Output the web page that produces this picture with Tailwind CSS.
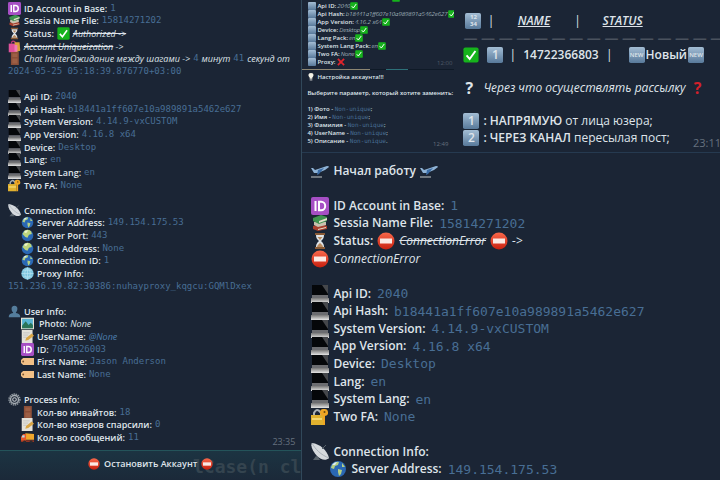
<!DOCTYPE html>
<html lang="ru">

<head>
    <meta charset="UTF-8">
    <meta name="viewport" content="width=device-width, initial-scale=1.0">
    <title>Accounts</title>
    <script src="https://cdn.jsdelivr.net/npm/@tailwindcss/browser@4"></script>
</head>

<body class="bg-[#0f1a27] text-[#dfe4ea] font-['Open_Sans','Noto_Sans',sans-serif]">

    <!-- Icons -->
    <svg class="absolute size-0" aria-hidden="true">
        <defs>
            <linearGradient id="steel" x2="0" y2="1">
                <stop offset="0" stop-color="#a3bdd4" />
                <stop offset="1" stop-color="#58799a" />
            </linearGradient>
            <linearGradient id="red" x2="0" y2="1">
                <stop offset="0" stop-color="#f8674a" />
                <stop offset="1" stop-color="#c9200f" />
            </linearGradient>
            <linearGradient id="metal" x2="0" y2="1">
                <stop offset="0" stop-color="#777" />
                <stop offset="1" stop-color="#e4e4e4" />
            </linearGradient>
        </defs>
        <symbol id="id" viewBox="0 0 18 18">
            <rect width="18" height="18" rx="2" fill="#a64fc4" />
            <path d="M4.5 4v10M8 4.8h2.2a4 4.2 0 0 1 0 8.4H8z" fill="none" stroke="#fff" stroke-width="2" />
        </symbol>
        <symbol id="books" viewBox="0 0 18 18">
            <path d="M2 12l9-2 5 2v3l-9 2-5-2z" fill="#a8412f" />
            <path d="M3 8l8-2 4 2v3l-8 2-4-2z" fill="#c8c2b0" />
            <path d="M2 4l8-3 6 2v4l-8 3-6-3z" fill="#3f9350" />
            <path d="M8 7l8-3v2L8 9zM7 15l8-2v1l-8 2z" fill="#e6e0cc" />
        </symbol>
        <symbol id="hourglass" viewBox="0 0 18 18">
            <path d="M4 1h10v2H4zM4 15h10v2H4z" fill="#8a5a35" />
            <path d="M5 3h8c0 3-1 4-3 6 2 2 3 3 3 6H5c0-3 1-4 3-6-2-2-3-3-3-6z" fill="#dfe3e6" />
            <path d="M6.500 5h5L9 8zM6 15c0-2 2-3 3-4 1 1 3 2 3 4z" fill="#b98a5e" />
        </symbol>
        <symbol id="check" viewBox="0 0 18 18">
            <rect x=".5" y=".5" width="17" height="17" rx="2" fill="#16b31c" />
            <path d="M4 9.500l3.500 4L14 4.500" fill="none" stroke="#fff" stroke-width="2.200" />
        </symbol>
        <symbol id="bags" viewBox="0 0 18 18">
            <path d="M5 5V3q2-3 5 0v2" fill="none" stroke="#c23a7a" stroke-width="1.500" />
            <path d="M1 5h10v12H1z" fill="#e0529b" />
            <path d="M9 3h7l1 12-6 2z" fill="#d9a03c" />
            <path d="M9 7h4v9H9z" fill="#f07cb8" />
        </symbol>
        <symbol id="door" viewBox="0 0 18 18">
            <path d="M4 0h11v18H4z" fill="#8b4f38" />
            <path d="M6 2h7v5H6zM6 9h7v7H6z" fill="#9d5f45" />
        </symbol>
        <symbol id="device" viewBox="0 0 18 18">
            <path d="M1 0h16v10H1z" fill="#05070a" />
            <path d="M11 0h6v9z" fill="#45474b" />
            <path d="M1 10h16v4H1z" fill="#6b6c70" />
            <path d="M0 13h18v5H0z" fill="url(#metal)" />
        </symbol>
        <symbol id="lock" viewBox="0 0 18 18">
            <path d="M3 8V5q3-6 7 0v3" fill="none" stroke="#a9b0b5" stroke-width="2" />
            <path d="M0 7h12v10H0z" fill="#e0b12f" />
            <path d="M1 10h10v2H1z" fill="#f4d66d" />
            <path d="M13 1a3.500 3.500 0 0 1 1 7v9h-2V8a3.500 3.500 0 0 1 1-7z" fill="#efa624" />
            <circle cx="13.500" cy="4" r="1" fill="#6b4a12" />
        </symbol>
        <symbol id="dish" viewBox="0 0 18 18">
            <path d="M5 13l-3 4h7l-2-3z" fill="#59636c" />
            <path d="M1 0c8 1 15 7 17 15-3 3-8 2-12-2S-1 3 1 0z" fill="#d5d9dd" />
            <path d="M1 0c3 6 9 12 17 15" fill="none" stroke="#a9b1b8" />
            <path d="M11 6l4-4" stroke="#59636c" />
        </symbol>
        <symbol id="globe" viewBox="0 0 18 18">
            <circle cx="9" cy="9" r="8" fill="#2a68b4" />
            <path d="M4 4q3-3 6-2l-1 3-3 1-1 3-3-1q0-2 2-4zM9 9l4 1-1 4-2 2-1-4zM13 3l3 4-3 0z" fill="#b4cf82" />
            <path d="M3 5q2-3 5-3l-2 3z" fill="#dcecf5" />
        </symbol>
        <symbol id="globe2" viewBox="0 0 18 18">
            <circle cx="9" cy="9" r="8" fill="#2a68b4" />
            <path d="M5 2q5-2 9 1l1 4-4 1-2 4-3-1-4-4z" fill="#bcd57b" />
            <path d="M4 4q3-3 6-2l-3 4z" fill="#eef3cc" />
        </symbol>
        <symbol id="mesh" viewBox="0 0 18 18">
            <circle cx="9" cy="9" r="8.500" fill="#7fc6df" />
            <path d="M1 9h16M9 1v16M3 4.500h12M3 13.500h12M9 1Q1 9 9 17Q17 9 9 1" fill="none" stroke="#b4e2f0" />
        </symbol>
        <symbol id="user" viewBox="0 0 18 18">
            <path d="M9 1c6 0 4 8 2 9v1c4 1 6 2 6 6H1c0-4 2-5 6-6v-1C5 9 3 1 9 1z" fill="#547d9c" />
        </symbol>
        <symbol id="photo" viewBox="0 0 18 18">
            <path d="M0 1h18v16H0z" fill="#e9e4d4" />
            <path d="M1.500 2.500h15v13h-15z" fill="#58b4d4" />
            <path d="M1.500 12l5-6 4 5 3-3 3 3v4.500h-15z" fill="#2b7458" />
        </symbol>
        <symbol id="memo" viewBox="0 0 18 18">
            <path d="M1 0h15v18H1z" fill="#e4e2da" />
            <path d="M3 4h9M3 7h7M3 10h5" stroke="#b9bbba" />
            <path d="M6 15l1-4 8-6 3 3-8 6z" fill="#d9a646" />
        </symbol>
        <symbol id="tag" viewBox="0 0 18 18">
            <path d="M3 4h15v10H3L0 11V7z" fill="#f2c086" />
            <circle cx="3" cy="9" r="1.300" fill="#7b5430" />
        </symbol>
        <symbol id="gear" viewBox="0 0 18 18">
            <circle cx="9" cy="9" r="7.500" fill="none" stroke="#929aa1" stroke-width="2" stroke-dasharray="2 1" />
            <circle cx="9" cy="9" r="5.500" fill="none" stroke="#a6adb3" stroke-width="2" />
            <circle cx="9" cy="9" r="2.500" fill="none" stroke="#c2c7cb" stroke-width="1.500" />
        </symbol>
        <symbol id="truck" viewBox="0 0 18 18">
            <path d="M6 3l12 1v8H6z" fill="#efa62c" />
            <path d="M0 8l3-4h4v10H0z" fill="#e4572c" />
            <path d="M2 6h3v3H1z" fill="#b5d7e4" />
            <path d="M0 13h18v2H0z" fill="#a8381f" />
            <circle cx="5" cy="15" r="2" fill="#2b2b2f" />
            <circle cx="14" cy="15" r="2" fill="#2b2b2f" />
        </symbol>
        <symbol id="stop" viewBox="0 0 18 18">
            <circle cx="9" cy="9" r="8.500" fill="url(#red)" />
            <path d="M3 6.500h12v5H3z" fill="#fbe9e4" />
        </symbol>
        <symbol id="plane" viewBox="0 0 18 18">
            <path d="M0 6l2 0 2 2 12-4q2 0 2 1l-4 3-7 3H3z" fill="#8fb3d6" />
            <path d="M7 8l6-2-5 6-2 1z" fill="#3a6ba5" />
            <path d="M0 14h11v2H0z" fill="#70777f" />
        </symbol>
        <symbol id="key" viewBox="0 0 18 18">
            <rect width="18" height="18" rx="2" fill="url(#steel)" />
        </symbol>
        <symbol id="cross" viewBox="0 0 18 18">
            <path d="M2 2l14 14M16 2L2 16" stroke="#e0242c" stroke-width="4" />
        </symbol>
        <symbol id="bulb" viewBox="0 0 18 18">
            <path d="M9 0c8 0 6 8 3 10v3H6v-3C3 8 1 0 9 0z" fill="#f5f3e6" />
            <path d="M6 14h6v3H6z" fill="#a9adb0" />
        </symbol>
    </svg>

    <main class="flex h-screen overflow-hidden">

        <!-- Account card -->
        <section class="flex w-[42%] shrink-0 flex-col border-r border-[#31485a]">
            <div class="relative flex flex-1 flex-col bg-[#1b2535] pt-[2px] pb-[6px] pl-2 text-[9px] leading-none whitespace-nowrap [&>p]:flex [&>p]:min-h-0 [&>p]:flex-1 [&>p]:items-center [&>p]:gap-[3px] [&_svg]:size-[13px] [&_svg]:shrink-0 [&_b]:font-semibold [&_code]:font-['DejaVu_Sans_Mono',monospace] [&_code]:text-[#486e94]">
                <p><svg><use href="#id" /></svg><b>ID Account in Base:</b><code>1</code></p>
                <p><svg><use href="#books" /></svg><b>Sessia Name File:</b><code>15814271202</code></p>
                <p><svg><use href="#hourglass" /></svg><b>Status:</b><svg><use href="#check" /></svg><i class="line-through">Authorized -&gt;</i></p>
                <p><svg><use href="#bags" /></svg><i><s>Account Uniqueization</s> -&gt;</i></p>
                <p><svg><use href="#door" /></svg><i>Chat InviterОжидание между шагами -&gt;</i><code>4</code><i>минут</i><code>41</code><i>секунд от</i></p>
                <p><code>2024-05-25 05:18:39.876770+03:00</code></p>
                <p></p>
                <p><svg><use href="#device" /></svg><b>Api ID:</b><code>2040</code></p>
                <p><svg><use href="#device" /></svg><b>Api Hash:</b><code>b18441a1ff607e10a989891a5462e627</code></p>
                <p><svg><use href="#device" /></svg><b>System Version:</b><code>4.14.9-vxCUSTOM</code></p>
                <p><svg><use href="#device" /></svg><b>App Version:</b><code>4.16.8 x64</code></p>
                <p><svg><use href="#device" /></svg><b>Device:</b><code>Desktop</code></p>
                <p><svg><use href="#device" /></svg><b>Lang:</b><code>en</code></p>
                <p><svg><use href="#device" /></svg><b>System Lang:</b><code>en</code></p>
                <p><svg><use href="#lock" /></svg><b>Two FA:</b><code>None</code></p>
                <p></p>
                <p><svg><use href="#dish" /></svg><b>Connection Info:</b></p>
                <p class="pl-[13px]"><svg><use href="#globe" /></svg><b>Server Address:</b><code>149.154.175.53</code></p>
                <p class="pl-[13px]"><svg><use href="#globe2" /></svg><b>Server Port:</b><code>443</code></p>
                <p class="pl-[13px]"><svg><use href="#globe2" /></svg><b>Local Address:</b><code>None</code></p>
                <p class="pl-[13px]"><svg><use href="#globe" /></svg><b>Connection ID:</b><code>1</code></p>
                <p class="pl-[13px]"><svg><use href="#mesh" /></svg><b>Proxy Info:</b></p>
                <p><code>151.236.19.82:30386:nuhayproxy_kqgcu:GQMlDxex</code></p>
                <p></p>
                <p><svg><use href="#user" /></svg><b>User Info:</b></p>
                <p class="pl-[13px]"><svg><use href="#photo" /></svg><b class="pl-[2px]">Photo:</b><i>None</i></p>
                <p class="pl-[13px]"><svg><use href="#memo" /></svg><b>UserName:</b><a href="#" class="italic text-[#4d7eae]">@None</a></p>
                <p class="pl-[13px]"><svg><use href="#id" /></svg><b>ID:</b><code>7050526003</code></p>
                <p class="pl-[13px]"><svg><use href="#tag" /></svg><b>First Name:</b><code>Jason Anderson</code></p>
                <p class="pl-[13px]"><svg><use href="#tag" /></svg><b>Last Name:</b><code>None</code></p>
                <p></p>
                <p><svg><use href="#gear" /></svg><b>Process Info:</b></p>
                <p class="pl-[13px]"><svg><use href="#door" /></svg><b>Кол-во инвайтов:</b><code>18</code></p>
                <p class="pl-[13px]"><svg><use href="#memo" /></svg><b>Кол-во юзеров спарсили:</b><code>0</code></p>
                <p class="pl-[13px]"><svg><use href="#truck" /></svg><b>Кол-во сообщений:</b><code>11</code></p>
                <time class="absolute right-[6px] bottom-[4px] text-[#66717f]">23:35</time>
            </div>
            <button class="relative flex h-[30px] items-center justify-center gap-1 overflow-hidden border-t border-[#24545a] bg-linear-to-b from-[#1c3442] to-[#1b2939] pb-1 text-[9px] font-semibold">
                <span class="absolute right-0 bottom-1 font-['DejaVu_Sans_Mono',monospace] text-lg leading-none whitespace-pre text-[#34444f]" aria-hidden="true"><b>lCase</b>(n cl</span>
                <svg class="relative size-3"><use href="#stop" /></svg>
                <span class="relative">Остановить Аккаунт</span>
                <svg class="relative size-3"><use href="#stop" /></svg>
            </button>
        </section>

        <div class="flex min-w-0 flex-1 flex-col">
            <div class="flex h-[152px] shrink-0">

                <!-- Settings cards -->
                <section class="flex w-[152px] shrink-0 flex-col text-[6px] leading-[8px] whitespace-nowrap [&_b]:font-semibold">
                    <div class="relative h-[69px] bg-[#1b2535] pl-[6px] [&>p]:flex [&>p]:items-center [&_b]:px-px [&_i]:font-light [&_svg]:size-2 [&_svg]:shrink-0">
                        <div class="flex h-[2px] items-end overflow-hidden pl-[84px]"><svg><use href="#check" /></svg></div>
                        <p><svg><use href="#key" /></svg><b>Api ID:</b><i>2040</i><svg><use href="#check" /></svg></p>
                        <p><svg><use href="#key" /></svg><b>Api Hash:</b><i>b18441a1ff607e10a989891a5462e627</i><svg><use href="#check" /></svg></p>
                        <p><svg><use href="#key" /></svg><b>App Version:</b><i>4.16.2 x64</i><svg><use href="#check" /></svg></p>
                        <p><svg><use href="#key" /></svg><b>Device:</b><i>Desktop</i><svg><use href="#check" /></svg></p>
                        <p><svg><use href="#key" /></svg><b>Lang Pack:</b><i>en</i><svg><use href="#check" /></svg></p>
                        <p><svg><use href="#key" /></svg><b>System Lang Pack:</b><i>en</i><svg><use href="#check" /></svg></p>
                        <p><svg><use href="#key" /></svg><b>Two FA:</b><i>None</i><svg><use href="#check" /></svg></p>
                        <p><svg><use href="#key" /></svg><b>Proxy:</b><svg><use href="#cross" /></svg></p>
                        <time class="absolute right-[2px] bottom-[2px] text-[#4f5a68]">12:00</time>
                    </div>
                    <div class="flex h-px gap-4"><span class="w-[68px] bg-[#8d8672]"></span><span class="w-[22px] bg-[#2d7078]"></span></div>
                    <div class="relative flex-1 bg-[#1b2535] pt-[3px] pl-[5px] [&_code]:font-['DejaVu_Sans_Mono',monospace] [&_code]:text-[#486e94]">
                        <p class="flex items-center gap-[2px]"><svg class="size-2"><use href="#bulb" /></svg><b>Настройка аккаунта!!!</b></p>
                        <p class="py-2"><b>Выберите параметр, который хотите заменить:</b></p>
                        <p><b>1) Фото - </b><code>Non-unique</code>;</p>
                        <p><b>2) Имя - </b><code>Non-unique</code>;</p>
                        <p><b>3) Фамилия - </b><code>Non-unique</code>;</p>
                        <p><b>4) UserName - </b><code>Non-unique</code>;</p>
                        <p><b>5) Описание - </b><code>Non-unique</code>.</p>
                        <time class="absolute right-[6px] bottom-[4px] text-[#66717f]">12:49</time>
                    </div>
                </section>

                <!-- Account list -->
                <section class="relative flex min-w-0 flex-1 flex-col overflow-hidden bg-[#1b2535] pt-[13px] pb-[6px] pl-[9px] text-[12px] leading-none whitespace-nowrap">
                    <table class="flex flex-3 flex-col">
                        <tbody class="flex flex-1 flex-col">
                            <tr class="flex flex-1 items-center italic">
                                <td class="relative ml-[2px] grid size-4 place-items-center text-[6px] leading-[7px] font-bold not-italic">
                                    <svg class="absolute size-4"><use href="#key" /></svg>
                                    <span class="relative text-center">12<br>34</span>
                                </td>
                                <td class="pl-[6px]">|</td>
                                <th class="w-[80px] text-center font-semibold underline">NAME</th>
                                <td>|</td>
                                <th class="pl-[22px] font-semibold underline">STATUS</th>
                            </tr>
                            <tr class="flex min-h-0 flex-1 items-center text-sm leading-none font-bold text-[#4a525e]">
                                <td colspan="5">— — — — — — — — — — — — — — —</td>
                            </tr>
                            <tr class="flex flex-1 items-center font-semibold">
                                <td><svg class="size-4"><use href="#check" /></svg></td>
                                <td class="relative ml-2 grid size-4 place-items-center">
                                    <svg class="absolute size-4"><use href="#key" /></svg><span class="relative">1</span>
                                </td>
                                <td class="pl-[6px] font-normal">|</td>
                                <td class="w-[90px] text-center">14722366803</td>
                                <td class="font-normal">|</td>
                                <td class="flex items-center gap-px pl-4">
                                    <span class="relative grid size-4 place-items-center text-[6px]"><svg class="absolute size-4"><use href="#key" /></svg><span class="relative">NEW</span></span>
                                    Новый
                                    <span class="relative grid size-4 place-items-center text-[6px]"><svg class="absolute size-4"><use href="#key" /></svg><span class="relative">NEW</span></span>
                                </td>
                            </tr>
                        </tbody>
                    </table>
                    <p class="flex-1"></p>
                    <p class="flex flex-1 items-center gap-2"><b class="w-3 text-center text-base leading-none">?</b><i>Через что осуществлять рассылку</i><b class="text-base leading-none text-[#d3202b]">?</b></p>
                    <p class="flex-1"></p>
                    <p class="flex flex-1 items-center gap-1">
                        <span class="relative grid size-4 place-items-center font-semibold"><svg class="absolute size-4"><use href="#key" /></svg><span class="relative">1</span></span>
                        <span><b class="font-semibold">: НАПРЯМУЮ</b> от лица юзера;</span>
                    </p>
                    <p class="flex flex-1 items-center gap-1">
                        <span class="relative grid size-4 place-items-center font-semibold"><svg class="absolute size-4"><use href="#key" /></svg><span class="relative">2</span></span>
                        <span><b class="font-semibold">: ЧЕРЕЗ КАНАЛ</b> пересылая пост;</span>
                    </p>
                    <time class="absolute -right-px bottom-1 text-[11px] text-[#66717f]">23:11</time>
                </section>
            </div>

            <!-- Start log -->
            <section class="flex flex-1 flex-col border-t border-[#263a50] bg-[#1b2535] pt-[9px] pb-[2px] pl-[9px] text-[12px] leading-none whitespace-nowrap [&>p]:flex [&>p]:min-h-0 [&>p]:flex-1 [&>p]:items-center [&>p]:gap-1 [&_svg]:size-[18px] [&_svg]:shrink-0 [&_b]:font-semibold [&_code]:ml-[2px] [&_code]:font-['DejaVu_Sans_Mono',monospace] [&_code]:text-[13px] [&_code]:text-[#486e94]">
                <p><svg><use href="#plane" /></svg><b>Начал работу</b><svg><use href="#plane" /></svg></p>
                <p></p>
                <p><svg><use href="#id" /></svg><b>ID Account in Base:</b><code>1</code></p>
                <p><svg><use href="#books" /></svg><b>Sessia Name File:</b><code>15814271202</code></p>
                <p><svg><use href="#hourglass" /></svg><b>Status:</b><svg><use href="#stop" /></svg><i class="line-through">ConnectionError</i><svg><use href="#stop" /></svg><i>-&gt;</i></p>
                <p><svg><use href="#stop" /></svg><i>ConnectionError</i></p>
                <p></p>
                <p><svg><use href="#device" /></svg><b>Api ID:</b><code>2040</code></p>
                <p><svg><use href="#device" /></svg><b>Api Hash:</b><code>b18441a1ff607e10a989891a5462e627</code></p>
                <p><svg><use href="#device" /></svg><b>System Version:</b><code>4.14.9-vxCUSTOM</code></p>
                <p><svg><use href="#device" /></svg><b>App Version:</b><code>4.16.8 x64</code></p>
                <p><svg><use href="#device" /></svg><b>Device:</b><code>Desktop</code></p>
                <p><svg><use href="#device" /></svg><b>Lang:</b><code>en</code></p>
                <p><svg><use href="#device" /></svg><b>System Lang:</b><code>en</code></p>
                <p><svg><use href="#lock" /></svg><b>Two FA:</b><code>None</code></p>
                <p></p>
                <p><svg><use href="#dish" /></svg><b>Connection Info:</b></p>
                <p class="pl-[18px]"><svg><use href="#globe" /></svg><b>Server Address:</b><code>149.154.175.53</code></p>
            </section>
        </div>
    </main>
</body>

</html>
